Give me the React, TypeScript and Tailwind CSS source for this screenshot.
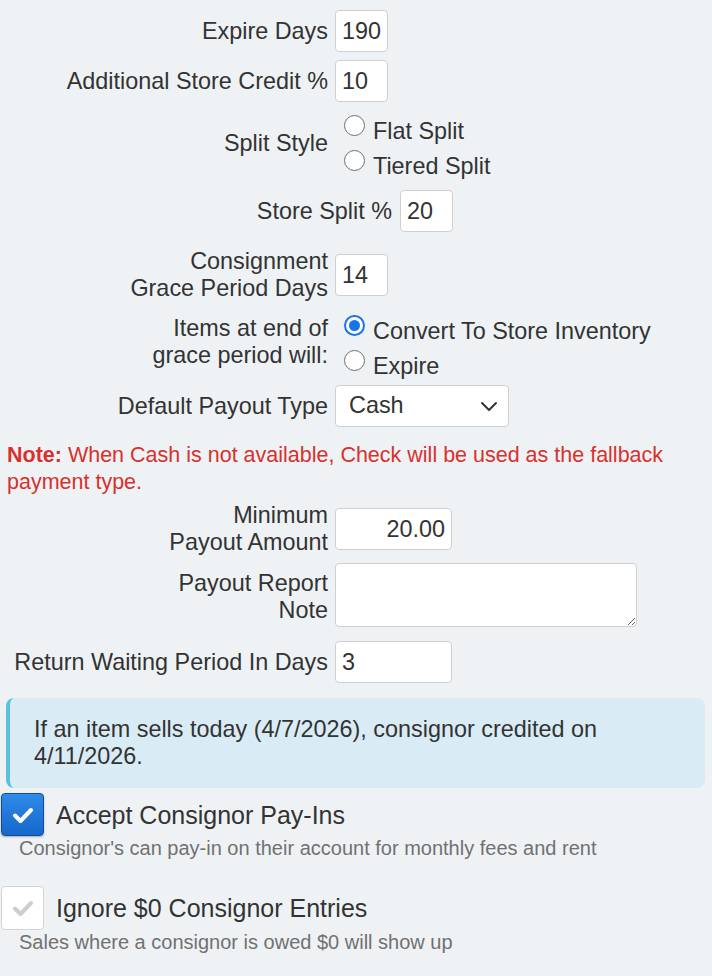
import React from "react";

function Label({ children, className = "" }: { children: React.ReactNode; className?: string }) {
  return (
    <div className={"w-[328px] shrink-0 text-right text-[23.4px] leading-[27px] text-[#333] " + className}>
      {children}
    </div>
  );
}

function TextBox({ value, w, align = "left" }: { value: string; w: string; align?: "left" | "right" }) {
  return (
    <input
      readOnly
      defaultValue={value}
      className={
        "h-[42px] rounded-[4px] border border-[#cfcfcf] bg-white px-[6px] text-[23.4px] text-[#333] outline-none font-['Liberation_Sans',Arial,sans-serif] " +
        w +
        (align === "right" ? " text-right" : "")
      }
    />
  );
}

function Radio({ checked, label }: { checked?: boolean; label: string }) {
  return (
    <div className="flex h-[35px] items-start">
      {checked ? (
        <div className="flex h-[21px] w-[21px] items-center justify-center rounded-full border-[2px] border-[#1a73e8] bg-white">
          <div className="h-[11px] w-[11px] rounded-full bg-[#1a73e8]" />
        </div>
      ) : (
        <div className="h-[21px] w-[21px] rounded-full border-[1.5px] border-[#6e6e6e] bg-white" />
      )}
      <span className="ml-[8px] mt-[3px] text-[23.4px] leading-[27px] text-[#333]">{label}</span>
    </div>
  );
}

export default function App() {
  return (
    <div className="min-h-[976px] w-[712px] bg-[#eef2f5] pt-[10px] font-['Liberation_Sans',Arial,sans-serif] text-[#333]">
      {/* Expire Days */}
      <div className="flex items-center">
        <Label>Expire Days</Label>
        <div className="ml-[7px]">
          <TextBox value="190" w="w-[53px]" />
        </div>
      </div>
      {/* Additional Store Credit */}
      <div className="mt-[8px] flex items-center">
        <Label>Additional Store Credit %</Label>
        <div className="ml-[7px]">
          <TextBox value="10" w="w-[53px]" />
        </div>
      </div>
      {/* Split Style */}
      <div className="mt-[13px] flex items-start">
        <Label className="mt-[15px]">Split Style</Label>
        <div className="ml-[16px] flex flex-col">
          <Radio label="Flat Split" />
          <Radio label="Tiered Split" />
        </div>
      </div>
      {/* Store Split */}
      <div className="mt-[5px] flex items-center pl-[64px]">
        <Label>Store Split %</Label>
        <div className="ml-[8px]">
          <TextBox value="20" w="w-[53px]" />
        </div>
      </div>
      {/* Consignment Grace */}
      <div className="mt-[16px] flex items-center">
        <Label>
          Consignment
          <br />
          Grace Period Days
        </Label>
        <div className="ml-[7px]">
          <TextBox value="14" w="w-[53px]" />
        </div>
      </div>
      {/* Items at end */}
      <div className="mt-[13px] flex items-start">
        <Label>
          Items at end of
          <br />
          grace period will:
        </Label>
        <div className="ml-[16px] flex flex-col">
          <Radio checked label="Convert To Store Inventory" />
          <Radio label="Expire" />
        </div>
      </div>
      {/* Default Payout Type */}
      <div className="flex items-center">
        <Label>Default Payout Type</Label>
        <div className="ml-[7px] flex h-[42px] w-[174px] items-center justify-between rounded-[4px] border border-[#cfcfcf] bg-white pl-[13px] pr-[10px]">
          <span className="text-[23.4px] text-[#333]">Cash</span>
          <svg width="18" height="12" viewBox="0 0 18 12" fill="none">
            <path d="M2 3 L9 10 L16 3" stroke="#333" strokeWidth="2" strokeLinecap="round" strokeLinejoin="round" />
          </svg>
        </div>
      </div>
      {/* Note */}
      <div className="mt-[15px] pl-[7px] pr-[30px] text-[21.5px] leading-[27px] text-[#d9302c]">
        <span className="font-bold">Note:</span> When Cash is not available, Check will be used as the fallback payment type.
      </div>
      {/* Minimum Payout */}
      <div className="mt-[6px] flex items-center">
        <Label>
          Minimum
          <br />
          Payout Amount
        </Label>
        <div className="ml-[7px]">
          <TextBox value="20.00" w="w-[117px]" align="right" />
        </div>
      </div>
      {/* Payout Report Note */}
      <div className="mt-[7px] flex items-start">
        <Label className="mt-[7px]">
          Payout Report
          <br />
          Note
        </Label>
        <div className="ml-[7px] flex">
          <textarea
            readOnly
            className="h-[64px] w-[302px] rounded-[4px] border border-[#cfcfcf] bg-white px-[6px] text-[23.4px] outline-none"
          />
        </div>
      </div>
      {/* Return waiting */}
      <div className="mt-[14px] flex items-center">
        <Label>Return Waiting Period In Days</Label>
        <div className="ml-[7px]">
          <TextBox value="3" w="w-[117px]" />
        </div>
      </div>
      {/* Info box */}
      <div className="ml-[6px] mr-[7px] mt-[15px] rounded-[8px] border-l-[4px] border-[#5bc0de] bg-[#d9ecf6] py-[18px] pl-[24px] pr-[20px] text-[23.4px] leading-[27px] text-[#333]">
        If an item sells today (4/7/2026), consignor credited on 4/11/2026.
      </div>
      {/* Accept Consignor Pay-Ins */}
      <div className="mt-[5px] flex items-center pl-[1px]">
        <div className="flex h-[43px] w-[43px] items-center justify-center rounded-[4px] border border-[#0d4f9e] bg-gradient-to-b from-[#2f8ae8] to-[#1567cc] shadow-[0_1px_2px_rgba(0,0,0,0.3)]">
          <svg width="22" height="18" viewBox="0 0 22 18">
            <path d="M3 9.5 L8.5 15 L19 4" stroke="#fff" strokeWidth="4" fill="none" strokeLinecap="round" strokeLinejoin="round" />
          </svg>
        </div>
        <span className="ml-[12px] text-[25px] leading-[30px] text-[#333]">Accept Consignor Pay-Ins</span>
      </div>
      <div className="pl-[19px] text-[20px] leading-[24px] text-[#717171]">
        Consignor's can pay-in on their account for monthly fees and rent
      </div>
      {/* Ignore $0 */}
      <div className="mt-[26px] flex items-center pl-[1px]">
        <div className="flex h-[44px] w-[43px] items-center justify-center rounded-[4px] border border-[#d4d4d4] bg-white">
          <svg width="22" height="18" viewBox="0 0 22 18">
            <path d="M3 9.5 L8.5 15 L19 4" stroke="#cdcdcd" strokeWidth="4" fill="none" strokeLinecap="round" strokeLinejoin="round" />
          </svg>
        </div>
        <span className="ml-[12px] text-[25px] leading-[30px] text-[#333]">Ignore $0 Consignor Entries</span>
      </div>
      <div className="pl-[19px] text-[20px] leading-[24px] text-[#717171]">
        Sales where a consignor is owed $0 will show up
      </div>
    </div>
  );
}
